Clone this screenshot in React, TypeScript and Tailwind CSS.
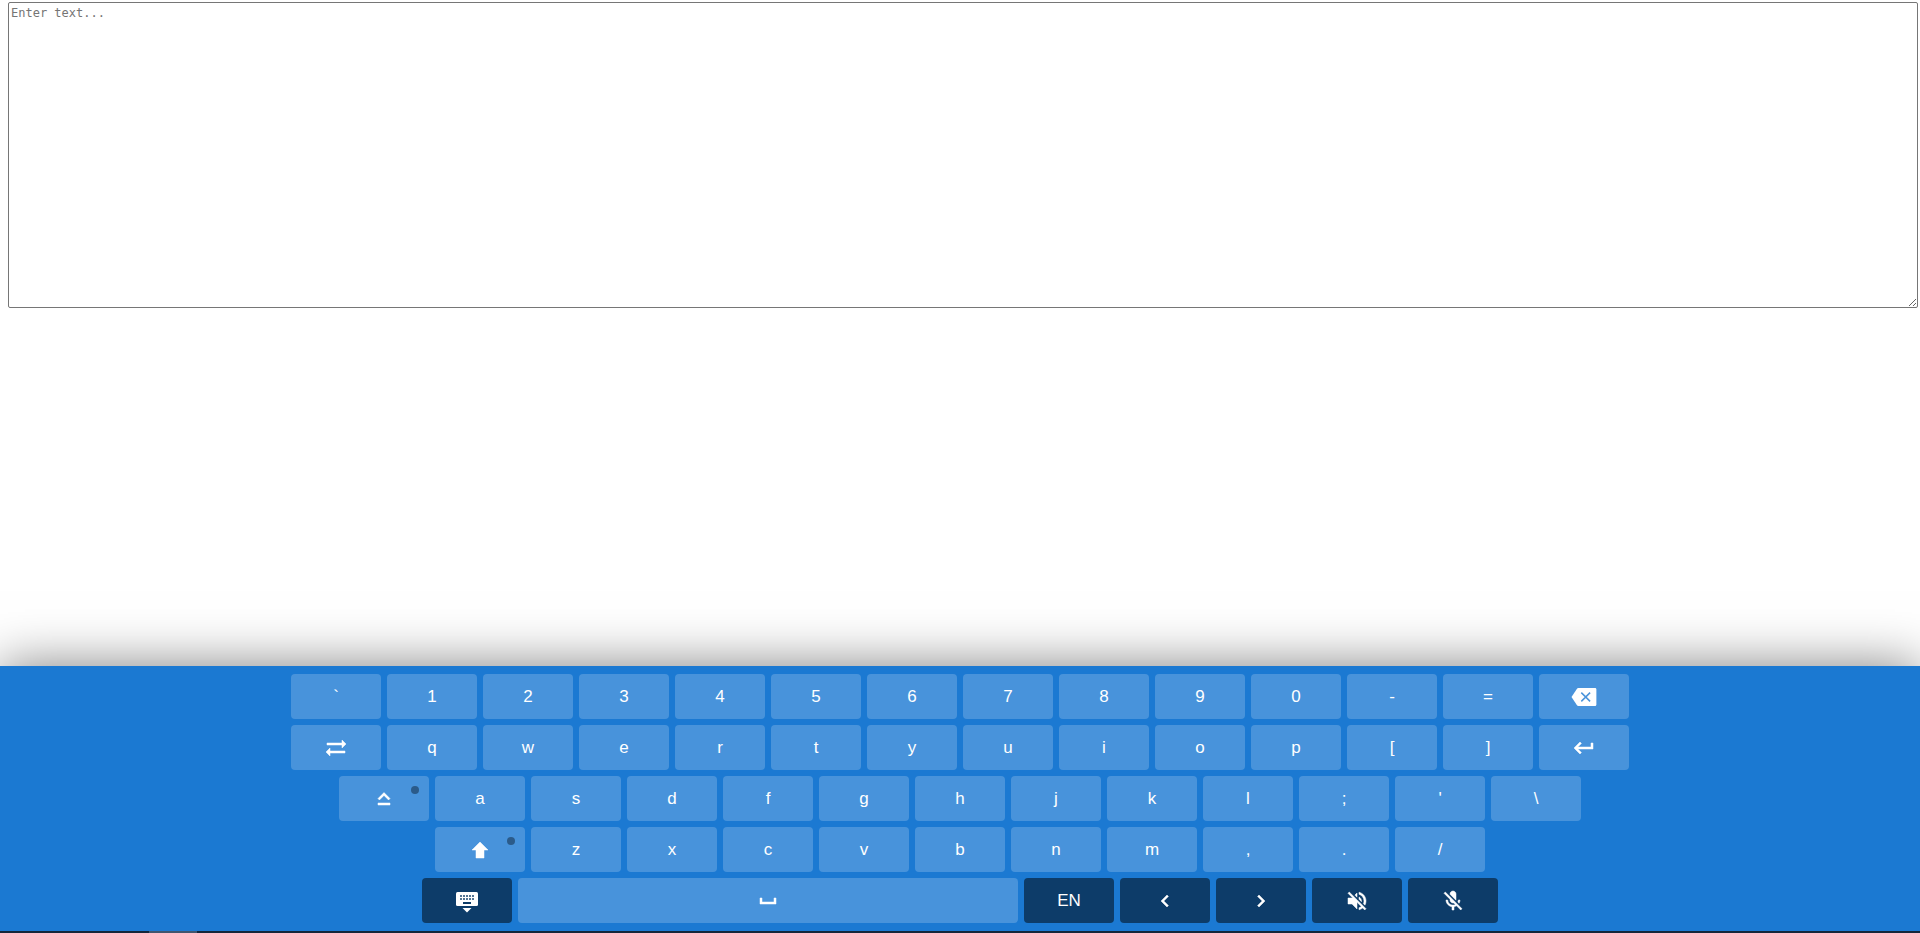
import type { ReactNode } from 'react';

type KeyDef = {
  id: string;
  label?: string;
  icon?: ReactNode;
  dark?: boolean;
  wide?: boolean;
  toggle?: boolean;
};

function Icon({ d }: { d: string }) {
  return (
    <svg width="24" height="24" viewBox="0 0 24 24" aria-hidden="true">
      <path d={d} fill="currentColor" stroke="currentColor" strokeWidth="0.5" />
    </svg>
  );
}

function BackspaceIcon() {
  return (
    <svg width="26" height="24" viewBox="0 0 26 24" fill="none" aria-hidden="true">
      <path
        d="M24 3H7.4c-.7 0-1.2.3-1.6.9L.5 12l5.3 8.1c.4.5.9.9 1.6.9H24c.9 0 1.4-.6 1.4-1.5v-15C25.400 3.600 24.900 3 24 3z"
        fill="currentColor"
      />
      <path d="M10.300 7.600l8.800 8.800M19.100 7.600l-8.800 8.800" stroke="#4a94db" strokeWidth="1.500" />
    </svg>
  );
}

function KeyboardHideIcon() {
  const columns = [5, 8, 11, 14, 17];
  return (
    <svg width="24" height="25" viewBox="0 0 24 25" aria-hidden="true">
      <rect x="1" y="4" width="22" height="14" rx="1.500" fill="currentColor" />
      {columns.map((x) => (
        <g key={x} fill="#0d3c68" opacity="0.7">
          <rect x={x} y="7" width="2" height="2" />
          <rect x={x} y="10" width="2" height="2" />
        </g>
      ))}
      <rect x="8" y="14" width="8" height="2" fill="#0d3c68" />
      <path d="M7.500 20h9L12 24.400z" fill="currentColor" />
    </svg>
  );
}

const paths = {
  tab: 'M22 8l-4-4v3H3v2h15v3l4-4zM2 16l4 4v-3h15v-2H6v-3l-4 4z',
  enter: 'M19 7v4H5.830l3.580-3.590L8 6l-6 6 6 6 1.410-1.410L5.830 13H21V7z',
  caps: 'M12 8.410L16.590 13 18 11.590l-6-6-6 6L7.410 13 12 8.410zM6 18h12v-2H6v2z',
  shift: 'M8 12H4l8-8 8 8h-4v8H8z',
  space: 'M18 9v4H6V9H4v6h16V9z',
  left: 'M15.410 16.590L10.830 12l4.580-4.590L14 6l-6 6 6 6 1.410-1.410z',
  right: 'M8.590 16.590L13.170 12 8.590 7.410 10 6l6 6-6 6-1.410-1.410z',
  sound:
    'M16.500 12c0-1.770-1.020-3.290-2.500-4.030v2.210l2.450 2.450c.03-.2.05-.41.05-.63zm2.500 0c0 .94-.2 1.820-.54 2.640l1.510 1.510C20.630 14.910 21 13.500 21 12c0-4.280-2.990-7.860-7-8.770v2.060c2.890.86 5 3.540 5 6.710zM4.270 3L3 4.270 7.730 9H3v6h4l5 5v-6.730l4.250 4.250c-.67.52-1.420.93-2.250 1.180v2.060c1.380-.31 2.630-.95 3.690-1.810L19.730 21 21 19.730l-9-9L4.270 3zM12 4L9.910 6.090 12 8.180V4z',
  voice:
    'M19 11h-1.700c0 .74-.16 1.430-.43 2.050l1.230 1.230c.56-.98.9-2.090.9-3.280zm-4.020.17c0-.06.02-.11.02-.17V5c0-1.660-1.340-3-3-3S9 3.340 9 5v.18l5.980 5.990zM4.270 3L3 4.270l6.010 6.010V11c0 1.660 1.330 3 2.990 3 .22 0 .44-.03.65-.08l1.660 1.660c-.71.33-1.500.52-2.310.52-2.760 0-5.300-2.100-5.300-5.100H5c0 3.410 2.720 6.230 6 6.720V21h2v-3.280c.91-.13 1.770-.45 2.540-.9L19.730 21 21 19.730 4.270 3z',
};

const letters = (chars: string): KeyDef[] => chars.split('').map((c) => ({ id: c }));

const rows: KeyDef[][] = [
  [...letters('`1234567890-='), { id: 'backspace', icon: <BackspaceIcon /> }],
  [
    { id: 'tab', icon: <Icon d={paths.tab} /> },
    ...letters('qwertyuiop[]'),
    { id: 'enter', icon: <Icon d={paths.enter} /> },
  ],
  [
    { id: 'caps lock', icon: <Icon d={paths.caps} />, toggle: true },
    ...letters("asdfghjkl;'\\"),
  ],
  [{ id: 'shift', icon: <Icon d={paths.shift} />, toggle: true }, ...letters('zxcvbnm,./')],
  [
    { id: 'hide keyboard', icon: <KeyboardHideIcon />, dark: true },
    { id: 'space', icon: <Icon d={paths.space} />, wide: true },
    { id: 'language', label: 'EN', dark: true },
    { id: 'left', icon: <Icon d={paths.left} />, dark: true },
    { id: 'right', icon: <Icon d={paths.right} />, dark: true },
    { id: 'sound', icon: <Icon d={paths.sound} />, dark: true },
    { id: 'voice', icon: <Icon d={paths.voice} />, dark: true },
  ],
];

function Key({ id, label, icon, dark, wide, toggle }: KeyDef) {
  return (
    <button
      type="button"
      aria-label={icon ? id : undefined}
      className={`relative flex h-[45px] items-center justify-center rounded text-[17px] leading-5 text-white ${
        wide ? 'w-[500px]' : 'w-[90px]'
      } ${dark ? 'bg-black/50' : 'bg-white/20'}`}
    >
      {icon ?? label ?? id}
      {toggle && (
        <span className="absolute top-[10px] right-[10px] size-2 rounded-full bg-[#2b5b8a]" />
      )}
    </button>
  );
}

export default function App() {
  return (
    <div className="flex min-h-screen flex-col justify-between overflow-hidden bg-white font-['Liberation_Sans',Arial,sans-serif]">
      <textarea
        aria-label="Text"
        placeholder="Enter text..."
        className="mt-0.5 mr-0.5 ml-2 h-[306px] resize rounded-[2px] border border-[#767676] bg-white p-0.5 font-['DejaVu_Sans_Mono',monospace] text-[12px] leading-4 text-black placeholder:text-[#757575]"
      />
      <div>
        <div className="flex flex-col gap-1.5 bg-[#1b79d2] py-2 shadow-[0_0_50px_rgba(0,0,0,0.5)]">
          {rows.map((row, i) => (
            <div key={i} className="flex justify-center gap-1.5">
              {row.map((k) => (
                <Key key={k.id} {...k} />
              ))}
            </div>
          ))}
        </div>
        <div className="relative h-0.5 bg-[#14263b] pl-[149px]">
          <div className="h-0.5 w-12 bg-[#41566f]" />
        </div>
      </div>
    </div>
  );
}
